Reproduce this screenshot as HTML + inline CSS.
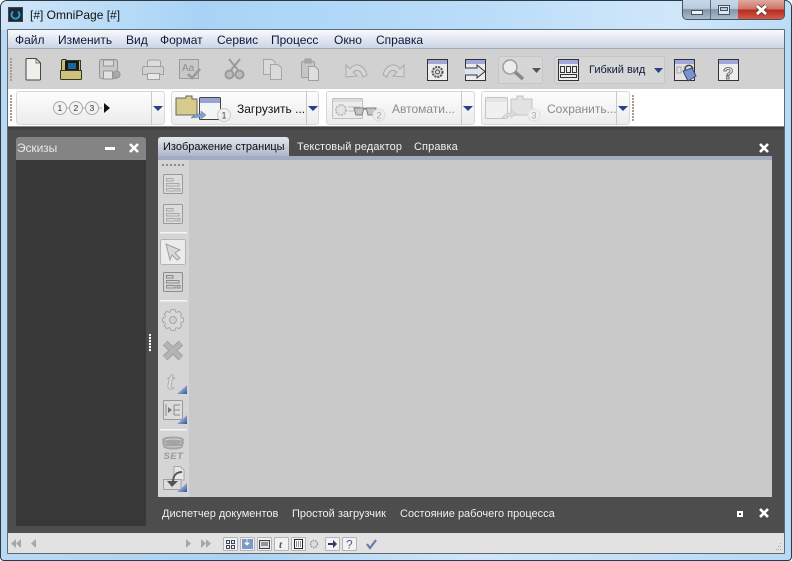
<!DOCTYPE html>
<html><head><meta charset="utf-8">
<style>
html,body{margin:0;padding:0;width:792px;height:561px;overflow:hidden;background:#fff}
body{position:relative;font-family:"Liberation Sans",sans-serif;font-size:12px}
.a{position:absolute}
.t{position:absolute;white-space:nowrap;line-height:14px}
.s{font-size:11px}
svg{position:absolute;overflow:visible}
.dots{position:absolute;width:2px;background:repeating-linear-gradient(#a8a08c 0 2px,transparent 2px 3px)}
.grp{position:absolute;border:1px solid #d8d8d8;border-radius:3px;background:linear-gradient(#fdfdfd,#ececec);box-sizing:border-box}
.arr{position:absolute;width:0;height:0;border-left:5px solid transparent;border-right:5px solid transparent;border-top:5px solid #2c3f8c}
</style></head><body>
<div class="a" style="left:0;top:0;width:792px;height:561px;border-radius:7px 7px 4px 4px;background:linear-gradient(90deg,#b9d9f3 0,#a9d3f5 30%,#cfe6fa 60%,#b5d9f7 100%);border:1px solid #2b3a44;box-sizing:border-box"></div>
<div class="a" style="left:1px;top:1px;width:790px;height:29px;border-radius:6px 6px 0 0;background:linear-gradient(90deg,#d0e6f8,#a8d3f6 25%,#b9dcf9 60%,#d0e7fa 85%,#bcdcf6)"></div>

<!-- title icon -->
<div class="a" style="left:8px;top:7px;width:15px;height:15px;background:#1b2a33;border:1px solid #444;box-sizing:border-box"></div>
<svg style="left:8px;top:7px" width="15" height="15"><path d="M5 4.500 A4 4 0 1 0 10 4.500" fill="none" stroke="#2aa0e0" stroke-width="1.800"/></svg>
<div class="t" style="left:30px;top:8px;color:#101010">[#] OmniPage [#]</div>

<!-- caption buttons -->
<div class="a" style="left:682px;top:0;width:103px;height:20px;border:1px solid #47535e;border-top:0;border-radius:0 0 5px 5px;box-sizing:border-box;overflow:hidden;background:linear-gradient(#c6d8e8 0,#b9ccdd 45%,#7f95a8 50%,#aabccb 100%)">
<div class="a" style="left:27px;top:0;width:1px;height:20px;background:#5c6c7a"></div>
<div class="a" style="left:55px;top:0;width:47px;height:20px;background:linear-gradient(#e0a9a0 0,#cf7468 45%,#b52c20 50%,#d4604e 100%)"></div>
<div class="a" style="left:8px;top:10px;width:12px;height:5px;background:#eef2f6;border:1px solid #46525c;box-sizing:border-box"></div>
<div class="a" style="left:35px;top:5px;width:12px;height:10px;border:1px solid #46525c;background:#dfe8f0;box-sizing:border-box"></div>
<div class="a" style="left:37px;top:7px;width:8px;height:4px;border:1px solid #46525c;background:#b7c8d6;box-sizing:border-box"></div>
</div>
<svg style="left:754px;top:4px" width="16" height="12"><path d="M3 2L12 10M12 2L3 10" stroke="#4d2a28" stroke-width="4.500"/><path d="M3 2L12 10M12 2L3 10" stroke="#fff" stroke-width="3"/></svg>

<!-- client -->
<div class="a" style="left:7px;top:29px;width:778px;height:525px;border:1px solid #5c6c78;box-sizing:border-box;border-radius:1px"></div>

<!-- menu -->
<div class="a" style="left:8px;top:30px;width:776px;height:19px;background:linear-gradient(#f8fafc,#ccd4e6);border-bottom:1px solid #a4aab8;box-sizing:border-box"></div>
<div class="t" style="left:15px;top:33px;color:#0c1a38">Файл</div>
<div class="t" style="left:58px;top:33px;color:#0c1a38">Изменить</div>
<div class="t" style="left:126px;top:33px;color:#0c1a38">Вид</div>
<div class="t" style="left:160px;top:33px;color:#0c1a38">Формат</div>
<div class="t" style="left:217px;top:33px;color:#0c1a38">Сервис</div>
<div class="t" style="left:271px;top:33px;color:#0c1a38">Процесс</div>
<div class="t" style="left:334px;top:33px;color:#0c1a38">Окно</div>
<div class="t" style="left:376px;top:33px;color:#0c1a38">Справка</div>

<!-- toolbar 1 -->
<div class="a" style="left:8px;top:49px;width:776px;height:40px;background:#d1d1d1"></div>
<div class="dots" style="left:10px;top:58px;height:24px"></div>

<svg style="left:0;top:49px" width="792" height="40">
<!-- new -->
<path d="M26 10.500Q26 9.500 27 9.500H36L40.500 14V30Q40.500 31 39.500 31H27Q26 31 26 30Z" fill="#efefeb" stroke="#444"/><path d="M36 10V14H40" fill="none" stroke="#777"/>
<!-- open -->
<path d="M61.500 12.500Q61.500 10.500 63 10.500H66V11.500H80.500V26H61.500Z" fill="#c8bd78" stroke="#38351e"/><rect x="65" y="12" width="14" height="9" fill="#16181a"/><rect x="68" y="14" width="8" height="6" fill="#1a6a9c"/><path d="M60.500 21.500H81.500V29.500Q81.500 30.500 80.500 30.500H61.500Q60.500 30.500 60.500 29.500Z" fill="#cdc27c" stroke="#38351e"/>
<!-- save -->
<g fill="#c8c8c8" stroke="#949494"><rect x="99.500" y="10.500" width="18" height="19" rx="2"/><rect x="103.500" y="11" width="10" height="6" fill="#dadada"/><rect x="103.500" y="22" width="9" height="8" fill="#e2e2e2"/><circle cx="116.500" cy="25.500" r="3.500" fill="#aaa"/></g>
<!-- print -->
<g fill="#dcdcdc" stroke="#a0a0a0"><path d="M147.500 17.500V13Q147.500 11 150 11H158Q160.500 11 160.500 13V17.500" /><path d="M144.500 17.500H161.500Q163.500 17.500 163.500 19.500V25.500H142.500V19.500Q142.500 17.500 144.500 17.500Z" fill="#d2d2d2"/><path d="M147.500 24.500H159.500V30.500H147.500Z" fill="#e8e8e8"/></g>
<!-- spell -->
<rect x="179.500" y="10.500" width="19" height="19" fill="#c8c8c8" stroke="#9c9c9c"/><text x="182" y="22" font-family="Liberation Sans" font-size="10" fill="#8e8e8e">Aa</text><path d="M188 25L192 29L200 20" fill="none" stroke="#9a9a9a" stroke-width="2.500"/>
<!-- cut -->
<g fill="none" stroke="#9a9a9a" stroke-width="2"><path d="M229 10L238 21M240 10L231 21"/><circle cx="229.500" cy="25.500" r="4" fill="#bcbcbc"/><circle cx="239.500" cy="25.500" r="4" fill="#bcbcbc"/></g>
<!-- copy -->
<g fill="#dadada" stroke="#a6a6a6"><path d="M263.500 10.500H272L275 13V25.500H263.500Z"/><path d="M270.500 15.500H278L281.500 19V30.500H270.500Z"/></g>
<!-- paste -->
<g fill="#c6c6c6" stroke="#9e9e9e"><rect x="301.500" y="12.500" width="13" height="16" rx="1"/><rect x="305" y="10" width="6" height="4" fill="#aaa"/><path d="M308.500 17.500H315L318.500 21V31.500H308.500Z" fill="#dedede"/></g>
<!-- undo/redo -->
<path d="M346 16L346 28L357 27L353 23C357 20 361 21 363 28L367 26C365 17 356 12 350 20Z" fill="#d6d6d6" stroke="#aaa"/>
<path d="M404 16L404 28L393 27L397 23C393 20 389 21 387 28L383 26C385 17 394 12 400 20Z" fill="#d6d6d6" stroke="#aaa"/>
<!-- settings -->
<rect x="427.500" y="10.500" width="20" height="21" fill="#ededed" stroke="#333"/><rect x="428" y="11" width="19" height="4" fill="#9fa8d6"/><circle cx="437.500" cy="23" r="5" fill="#ddd" stroke="#555" stroke-width="2" stroke-dasharray="2 1"/><circle cx="437.500" cy="23" r="2" fill="none" stroke="#555"/>
<!-- arrow window -->
<rect x="465.500" y="10.500" width="20" height="21" fill="#ededed" stroke="#333"/><rect x="466" y="11" width="19" height="4" fill="#9fa8d6"/><path d="M465 19H477V16L485 22.500L477 29V26H465" fill="#dfe4f2" stroke="#333"/>
<!-- zoom group -->
<rect x="498.500" y="7.500" width="44" height="27" rx="2" fill="#d6d6d6" stroke="#c6c6c6"/>
<circle cx="510" cy="18" r="7" fill="#ececec" stroke="#a0a0a0" stroke-width="1.500"/><path d="M515 23L523 30" stroke="#8a8a8a" stroke-width="3.500"/>
<path d="M532 19H541L536.500 24Z" fill="#555"/>
<!-- view group -->
<rect x="554.500" y="7.500" width="110" height="27" rx="2" fill="#d6d6d6" stroke="#c6c6c6"/>
<rect x="558.500" y="10.500" width="20" height="21" fill="#ededed" stroke="#333"/><rect x="559" y="11" width="19" height="4" fill="#9fa8d6"/>
<g fill="none" stroke="#333"><rect x="560.500" y="17.500" width="4" height="6"/><rect x="566.500" y="17.500" width="4" height="6"/><rect x="572.500" y="17.500" width="4" height="6"/><rect x="560.500" y="25.500" width="16" height="3"/></g>
<path d="M654 19H663L658.500 24Z" fill="#2c3f8c"/>
<!-- lock -->
<rect x="674.500" y="10.500" width="20" height="21" fill="#e2e2e2" stroke="#333"/><rect x="675" y="11" width="19" height="4" fill="#9fa8d6"/><path d="M677 18H681V24H677ZM683 18H686" fill="none" stroke="#aaa"/><path d="M685 21C685 15 692 15 693 20" fill="none" stroke="#444" stroke-width="1.500"/><path d="M683 22L692 19L696 27L688 32Z" fill="#7d90cc" stroke="#3a4a7c"/>
<!-- help -->
<rect x="718.500" y="10.500" width="20" height="21" fill="#ededed" stroke="#333"/><rect x="719" y="11" width="19" height="4" fill="#9fa8d6"/>
<text x="723" y="30" font-family="Liberation Sans" font-size="17" font-weight="bold" fill="#eee" stroke="#555" stroke-width=".8">?</text>
</svg>
<div class="t s" style="left:589px;top:63px;color:#0c1a38">Гибкий вид</div>

<!-- toolbar 2 -->
<div class="a" style="left:8px;top:89px;width:776px;height:38px;background:#fff;border-bottom:1px solid #888;box-sizing:border-box"></div>
<div class="dots" style="left:10px;top:95px;height:26px"></div>
<div class="dots" style="left:632px;top:95px;height:26px"></div>

<div class="grp" style="left:16px;top:91px;width:149px;height:34px"></div>
<div class="a" style="left:151px;top:91px;width:1px;height:34px;background:#c8c8c8"></div>
<div class="arr" style="left:153px;top:106px"></div>

<svg style="left:0;top:89px" width="792" height="38">
<g fill="#f2f2f2" stroke="#aaa"><path d="M66 19H102" stroke="#aaa"/><circle cx="60" cy="19" r="6.500"/><circle cx="76" cy="19" r="6.500"/><circle cx="92" cy="19" r="6.500"/></g>
<g font-family="Liberation Sans" font-size="8.500" fill="#333"><text x="57.500" y="22">1</text><text x="73.500" y="22">2</text><text x="89.500" y="22">3</text></g>
<path d="M104 14V24L110 19Z" fill="#111"/>
</svg>

<div class="grp" style="left:171px;top:91px;width:148px;height:34px"></div>
<div class="a" style="left:306px;top:91px;width:1px;height:34px;background:#c8c8c8"></div>
<div class="arr" style="left:308px;top:106px"></div>
<svg style="left:0;top:89px" width="792" height="38">
<path d="M176 9H186V7H192V10H197V26H176Z" fill="#d6cb8a" stroke="#666"/>
<rect x="199.500" y="8.500" width="21" height="22" rx="1" fill="#f4f4f4" stroke="#444"/><rect x="200" y="9" width="20" height="5" fill="#97a4d2"/>
<path d="M191 29C194 25 198 25 201 25V22L206 26L201 30V28C197 28 194 29 191 29Z" fill="#7fa3cf" stroke="#55708f" stroke-width=".5"/>
<circle cx="224" cy="26" r="6.500" fill="#f0f0f0" stroke="#ccc"/><text x="221.500" y="29.500" font-family="Liberation Sans" font-size="9" fill="#444">1</text>
</svg>
<div class="t" style="left:237px;top:102px;color:#111">Загрузить ...</div>

<div class="grp" style="left:326px;top:91px;width:149px;height:34px"></div>
<div class="a" style="left:461px;top:91px;width:1px;height:34px;background:#c8c8c8"></div>
<div class="arr" style="left:463px;top:106px"></div>
<svg style="left:0;top:89px" width="792" height="38">
<rect x="332.500" y="9.500" width="30" height="20" rx="1" fill="#ececec" stroke="#c0c0c0"/><rect x="333" y="10" width="29" height="3" fill="#dcdcdc"/>
<circle cx="341" cy="21" r="5" fill="#e4e4e4" stroke="#bbb" stroke-width="2" stroke-dasharray="2 1"/>
<g stroke="#bbb"><path d="M348 18H360M348 22H358"/></g>
<path d="M354 19H364L362 26H356ZM366 19H376L374 26H368Z" fill="#c4c4c4" stroke="#808080"/>
<path d="M364 20H366" stroke="#555"/>
<circle cx="379" cy="26" r="6" fill="#ececec" stroke="#dcdcdc"/><text x="376.500" y="29.500" font-family="Liberation Sans" font-size="9" fill="#aaa">2</text>
</svg>
<div class="t" style="left:392px;top:102px;color:#8a8a8a">Автомати...</div>

<div class="grp" style="left:481px;top:91px;width:149px;height:34px"></div>
<div class="a" style="left:616px;top:91px;width:1px;height:34px;background:#c8c8c8"></div>
<div class="arr" style="left:618px;top:106px"></div>
<svg style="left:0;top:89px" width="792" height="38">
<rect x="485.500" y="8.500" width="22" height="21" rx="1" fill="#f0f0f0" stroke="#c4c4c4"/><rect x="486" y="9" width="21" height="4" fill="#e4e4e4"/>
<path d="M511 10H517V7H523V10H532V26H511Z" fill="#e2e2e2" stroke="#c4c4c4"/>
<path d="M502 29C504 25 508 24 511 24V21L516 25L511 29V27C508 27 505 28 502 29Z" fill="#dcdcdc" stroke="#bbb" stroke-width=".5"/>
<circle cx="534" cy="26" r="6" fill="#f0f0f0" stroke="#e0e0e0"/><text x="531.500" y="29.500" font-family="Liberation Sans" font-size="9" fill="#aaa">3</text>
</svg>
<div class="t" style="left:547px;top:102px;color:#8a8a8a">Сохранить...</div>

<!-- dark area -->
<div class="a" style="left:8px;top:127px;width:776px;height:406px;background:#4d4d4d"></div>
<div class="a" style="left:8px;top:127px;width:776px;height:4px;background:linear-gradient(#3a3a3a,#4d4d4d)"></div>

<!-- left panel -->
<div class="a" style="left:16px;top:137px;width:130px;height:23px;background:#848484;border-radius:3px 3px 0 0"></div>
<div class="a" style="left:16px;top:160px;width:130px;height:366px;background:#383838"></div>
<div class="t" style="left:17px;top:141px;color:#e8e8e8;letter-spacing:-.1px">Эскизы</div>
<div class="a" style="left:105px;top:147px;width:10px;height:3px;background:#fff"></div>
<svg style="left:129px;top:143px" width="10" height="10"><path d="M1 1L9 9M9 1L1 9" stroke="#fff" stroke-width="2.600"/></svg>

<!-- grip -->
<div class="a" style="left:149px;top:334px;width:2px;height:18px;background:repeating-linear-gradient(#fff 0 2px,#666 2px 3px)"></div>

<!-- tabs -->
<div class="a" style="left:158px;top:137px;width:131px;height:23px;background:linear-gradient(#e4e7ee,#a4acc2);border-radius:3px 3px 0 0"></div>
<div class="a" style="left:158px;top:156px;width:614px;height:4px;background:#a3abc0"></div>
<div class="t s" style="left:163px;top:140px;color:#0e0e0e">Изображение страницы</div>
<div class="t s" style="left:297px;top:140px;color:#f0f0f0;letter-spacing:.1px">Текстовый редактор</div>
<div class="t s" style="left:414px;top:140px;color:#f0f0f0;letter-spacing:.1px">Справка</div>
<svg style="left:759px;top:143px" width="10" height="10"><path d="M1 1L9 9M9 1L1 9" stroke="#fff" stroke-width="2.600"/></svg>

<div class="a" style="left:158px;top:160px;width:614px;height:337px;background:#c9c9c9"></div>
<div class="a" style="left:158px;top:160px;width:31px;height:337px;background:#d5d5d5"></div>
<div class="a" style="left:162px;top:164px;width:22px;height:2px;background:repeating-linear-gradient(90deg,#8f8f80 0 2px,transparent 2px 4px)"></div>

<svg style="left:0;top:0" width="792" height="561">
<defs><linearGradient id="tri" x1="0" y1="0" x2="1" y2="1"><stop offset="0.3" stop-color="#b4c4dc"/><stop offset="1" stop-color="#2a55a0"/></linearGradient></defs>
<!-- side icons -->
<g fill="none" stroke="#a8a8a8">
<rect x="163.500" y="174.500" width="19" height="19" rx="1" fill="#dcdcdc" stroke="#999"/><path d="M166.500 178.500H173V181H166.500ZM166.500 183.500H179V186H166.500ZM166.500 188.500H175V191H166.500ZM177 188.500H180V191H177Z"/>
<rect x="163.500" y="204.500" width="19" height="19" rx="1" fill="#dcdcdc" stroke="#999"/><path d="M166.500 208.500H173V211H166.500ZM166.500 213.500H179V216H166.500ZM166.500 218.500H175V221H166.500ZM177 218.500H180V221H177Z"/>
</g>
<rect x="160" y="232" width="27" height="1.500" fill="#f4f4f4"/>
<rect x="160.500" y="239.500" width="25" height="25" rx="2" fill="#ececec" stroke="#b4b4b4"/>
<path d="M166 244L180 250L175 253L180 258L177 260L172 255L170 260Z" fill="#d8d8d8" stroke="#a0a0a0"/>
<rect x="163.500" y="272.500" width="19" height="19" rx="1" fill="#d4d4d4" stroke="#8e8e8e"/><path d="M166.500 275.500H173V278H166.500ZM166.500 280.500H179V283H166.500ZM166.500 285.500H175V288H166.500ZM177 285.500H180V288H177Z" fill="none" stroke="#8a8a8a"/>
<rect x="160" y="300" width="27" height="1.500" fill="#f4f4f4"/>
<!-- gear -->
<g fill="#d4d4d4" stroke="#aaa">
<rect x="170.500" y="309.500" width="5" height="21" rx="1.500"/>
<rect x="170.500" y="309.500" width="5" height="21" rx="1.500" transform="rotate(45 173 320)"/>
<rect x="170.500" y="309.500" width="5" height="21" rx="1.500" transform="rotate(90 173 320)"/>
<rect x="170.500" y="309.500" width="5" height="21" rx="1.500" transform="rotate(135 173 320)"/>
</g>
<circle cx="173" cy="320" r="8" fill="#d8d8d8"/><circle cx="173" cy="320" r="3.500" fill="#d0d0d0" stroke="#a8a8a8"/>
<!-- x -->
<path d="M165 343L181 358M181 343L165 358" stroke="#a0a0a0" stroke-width="6.500"/>
<path d="M165 343L181 358M181 343L165 358" stroke="#b4b4b4" stroke-width="4.500"/>
<text x="167" y="389" font-family="Liberation Serif" font-style="italic" font-weight="bold" font-size="25" fill="#dcdcdc" stroke="#a8a8a8" stroke-width=".8">t</text>
<rect x="163.500" y="400.500" width="19" height="19" rx="1" fill="#dcdcdc" stroke="#999"/><path d="M166 404V416M174 405V415M174 410H180M174 405H180M174 415H180" stroke="#888" fill="none"/><path d="M168 407V413L172 410Z" fill="#777"/>
<rect x="160" y="429" width="27" height="1.500" fill="#f4f4f4"/>
<g fill="none" stroke="#a4a4a4" stroke-width="2"><ellipse cx="173" cy="440" rx="10" ry="2.500"/><ellipse cx="173" cy="443" rx="10" ry="2.500"/><ellipse cx="173" cy="446" rx="9" ry="2.500"/></g>
<text x="163.500" y="459" font-family="Liberation Sans" font-style="italic" font-weight="bold" font-size="9.500" letter-spacing=".5" fill="#999">SET</text>
<path d="M174 466.500H180L184 470V480H174Z" fill="#e6e6e6" stroke="#a8a8a8"/><path d="M163.500 479.500H181V489.500H163.500Z" fill="#dcdcdc" stroke="#a0a0a0"/><path d="M182 472C176 472 173 476 173 482" fill="none" stroke="#555" stroke-width="2"/><path d="M167 481H178L172 487Z" fill="#555"/>
<!-- corner triangles -->
<g fill="url(#tri)"><path d="M187 385V394H177Z"/><path d="M187 415V424H177Z"/><path d="M187 483V492H177Z"/></g>
</svg>

<!-- bottom tabs -->
<div class="t s" style="left:162px;top:507px;color:#f0f0f0">Диспетчер документов</div>
<div class="t s" style="left:292px;top:507px;color:#f0f0f0">Простой загрузчик</div>
<div class="t s" style="left:400px;top:507px;color:#f0f0f0">Состояние рабочего процесса</div>
<div class="a" style="left:737px;top:511px;width:6px;height:6px;border:2px solid #fff;background:#4d4d4d;box-sizing:border-box"></div>
<svg style="left:759px;top:508px" width="10" height="10"><path d="M1 1L9 9M9 1L1 9" stroke="#fff" stroke-width="2.600"/></svg>

<!-- status bar -->
<div class="a" style="left:8px;top:533px;width:776px;height:21px;background:#e2e2e2;border-bottom:1px solid #666;box-sizing:border-box"></div>
<svg style="left:0;top:533px" width="792" height="20">
<g fill="#a8a8a8"><path d="M16 6V15L11 10.500ZM21 6V15L16 10.500Z"/><path d="M36 6V15L31 10.500Z"/><path d="M186 6V15L191 10.500Z"/><path d="M201 6V15L206 10.500ZM206 6V15L211 10.500Z"/></g>
<g transform="translate(0 1)">
<g stroke="#b4b4b4" fill="#f2f2f2"><rect x="223.500" y="3.500" width="14" height="13" rx="1"/><rect x="240.500" y="3.500" width="14" height="13" rx="1"/><rect x="257.500" y="3.500" width="14" height="13" rx="1"/><rect x="274.500" y="3.500" width="14" height="13" rx="1"/><rect x="291.500" y="3.500" width="14" height="13" rx="1"/><rect x="325.500" y="3.500" width="14" height="13" rx="1"/><rect x="342.500" y="3.500" width="14" height="13" rx="1"/></g>
<g fill="none" stroke="#3a4560"><path d="M226.500 6.500H229.500V9.500H226.500ZM231.500 6.500H234.500V9.500H231.500ZM226.500 11.500H229.500V14.500H226.500ZM231.500 11.500H234.500V14.500H231.500Z"/></g>
<rect x="242" y="5" width="11" height="10" fill="#7c9ac8"/><path d="M247 5V11M245 9H249L247 11Z" stroke="#fff" fill="#fff" stroke-width=".8"/>
<rect x="259.500" y="6.500" width="10" height="8" fill="#dfe3ee" stroke="#444"/><path d="M261 9H268M261 11H268" stroke="#444"/>
<text x="279" y="14" font-family="Liberation Serif" font-style="italic" font-weight="bold" font-size="11" fill="#556">t</text>
<rect x="294.500" y="5.500" width="8" height="9" fill="#fff" stroke="#222"/><path d="M296 8H301M296 10H301M296 12H301" stroke="#222" stroke-dasharray="1 1"/>
<circle cx="314" cy="10" r="3.500" fill="#ddd" stroke="#999" stroke-width="1.500" stroke-dasharray="1.500 1"/>
<path d="M328 9H333V6L337 10L333 14V11H328Z" fill="#2e3c5c"/>
<text x="346" y="14.500" font-family="Liberation Sans" font-size="12" fill="#4a5a80">?</text>
<path d="M367 10L370 14L376 6" fill="none" stroke="#6a7ca4" stroke-width="2.200"/>
</g>
<g fill="#aaa"><rect x="780" y="10" width="1" height="1"/><rect x="778" y="13" width="1" height="1"/><rect x="780" y="13" width="1" height="1"/><rect x="776" y="16" width="1" height="1"/><rect x="778" y="16" width="1" height="1"/><rect x="780" y="16" width="1" height="1"/></g>
</svg>
</body></html>
